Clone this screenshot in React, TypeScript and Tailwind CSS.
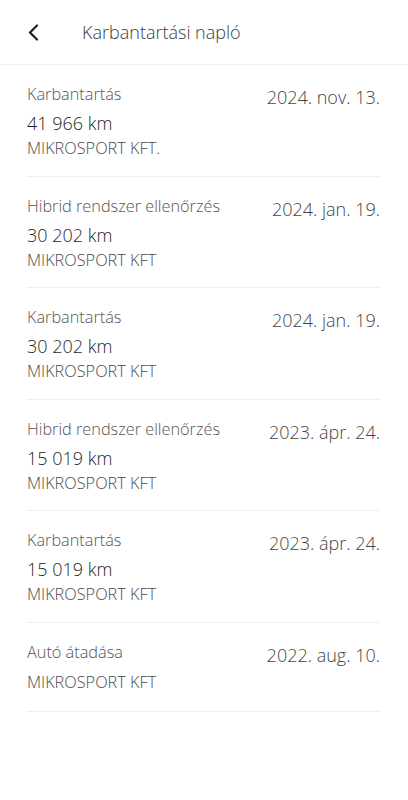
import React from 'react';

type Entry = {
  title: string;
  date: string;
  km?: string;
  dealer: string;
};

const entries: Entry[] = [
  { title: 'Karbantartás', date: '2024. nov. 13.', km: '41 966 km', dealer: 'MIKROSPORT KFT.' },
  { title: 'Hibrid rendszer ellenőrzés', date: '2024. jan. 19.', km: '30 202 km', dealer: 'MIKROSPORT KFT' },
  { title: 'Karbantartás', date: '2024. jan. 19.', km: '30 202 km', dealer: 'MIKROSPORT KFT' },
  { title: 'Hibrid rendszer ellenőrzés', date: '2023. ápr. 24.', km: '15 019 km', dealer: 'MIKROSPORT KFT' },
  { title: 'Karbantartás', date: '2023. ápr. 24.', km: '15 019 km', dealer: 'MIKROSPORT KFT' },
  { title: 'Autó átadása', date: '2022. aug. 10.', dealer: 'MIKROSPORT KFT' },
];

const App: React.FC = () => {
  return (
    <div className="min-h-[800px] w-full bg-white font-['Open_Sans','Liberation_Sans',sans-serif]">
      {/* Header */}
      <header className="flex h-[65px] items-center border-b border-[#f0f0f0]">
        <button className="ml-[24px] flex h-[28px] w-[18px] items-center justify-center text-[#1f1f1f]">
          <svg width="13" height="17" viewBox="0 0 13 17" fill="none" stroke="currentColor" strokeWidth="2.2" strokeLinecap="round" strokeLinejoin="round">
            <path d="M10 1.5L3 8.5l7 7" />
          </svg>
        </button>
        <h1 className="ml-[40px] text-[18px] leading-[28px] font-light text-[#3a3a3a]">Karbantartási napló</h1>
      </header>

      {/* List */}
      <div className="pl-[27px] pr-[28px]">
        {entries.map((e, i) => (
          <div
            key={i}
            className={
              i === entries.length - 1
                ? 'border-b border-[#efefef] pt-[18px] pb-[16px]'
                : 'border-b border-[#efefef] pt-[18px] pb-[14.5px]'
            }
          >
            <div className="flex items-start justify-between">
              <p className="text-[16.3px] leading-[22px] font-light text-[#555555]">{e.title}</p>
              <p className="text-[18px] leading-[28px] font-light text-[#444444]">{e.date}</p>
            </div>
            {e.km && <p className="text-[18px] leading-[24px] font-light text-[#1f1f1f]">{e.km}</p>}
            <p className="text-[16.3px] leading-[26px] font-light text-[#4a4a4a]">{e.dealer}</p>
          </div>
        ))}
      </div>
    </div>
  );
};

export default App;
